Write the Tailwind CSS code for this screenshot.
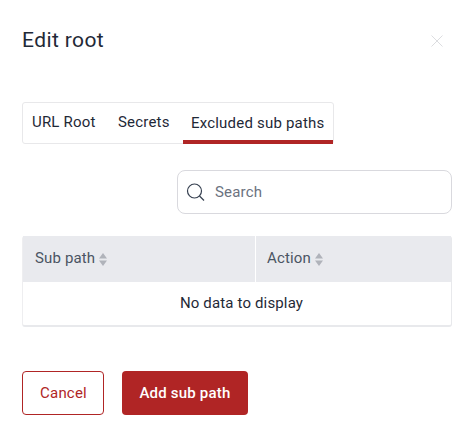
<!DOCTYPE html>
<html lang="en">
<head>
    <meta charset="UTF-8">
    <title>Edit root</title>
    <script src="https://cdn.jsdelivr.net/npm/@tailwindcss/browser@4"></script>
</head>
<body class="bg-white font-['Roboto',sans-serif] text-[#1f2937] h-[439px] overflow-hidden">
    <div class="flex flex-col pl-[22px] pr-[22px]">
        <!-- header -->
        <div class="flex justify-between items-center pt-[26px] h-[54px]">
            <h1 class="text-[21px] leading-[28px] font-normal text-[#1f2937] tracking-[0.4px]">Edit root</h1>
            <svg class="w-[12px] h-[12px] mr-[9px] mt-[2px]" viewBox="0 0 12 12" fill="none" stroke="#dcdde0" stroke-width="1"><path d="M0.5 0.5L11.5 11.5M11.5 0.5L0.5 11.5"/></svg>
        </div>
        <!-- tabs -->
        <div class="mt-[48px] flex w-[312px] h-[42px] border border-[#e8e8ea] rounded-[3px] text-[15px] tracking-[0.2px] text-[#1f2937]">
            <div class="pl-[9px] pt-[8px] w-[95px]">URL Root</div>
            <div class="pt-[8px] w-[65px]">Secrets</div>
            <div class="flex-1 pl-[8px] pt-[9px] border-b-[4px] border-[#b02525] -mb-px">Excluded sub paths</div>
        </div>
        <!-- search -->
        <div class="mt-[26px] ml-auto flex items-center w-[275px] h-[44px] border border-[#d9d9de] rounded-[8px]">
            <svg class="w-[20px] h-[20px] ml-[8px]" viewBox="0 0 20 20" fill="none" stroke="#374151" stroke-width="1.2"><circle cx="8.5" cy="9" r="7"/><path d="M13.5 14L18 18.5"/></svg>
            <span class="ml-[9px] text-[15px] tracking-[0.2px] text-[#6b7280]">Search</span>
        </div>
        <!-- table -->
        <div class="mt-[22px] border-r border-b-2 border-[#e8e9ec] rounded-[3px] border-l border-l-[#eeeef0]">
            <div class="flex h-[46px] bg-[#e9eaee] text-[15px] tracking-[0.15px] text-[#4b5563]">
                <div class="flex items-center w-[233px] pl-[12px] pb-[2px] border-r border-white">Sub path<svg class="ml-[4px] w-[8px] h-[13px] mt-[2px]" viewBox="0 0 8 13" fill="#b0b3ba"><path d="M4 0L8 5.5H0Z M0 7.5H8L4 13Z"/></svg></div>
                <div class="flex items-center pl-[11px] pb-[2px]">Action<svg class="ml-[4px] w-[8px] h-[13px] mt-[2px]" viewBox="0 0 8 13" fill="#b0b3ba"><path d="M4 0L8 5.5H0Z M0 7.5H8L4 13Z"/></svg></div>
            </div>
            <div class="h-[43px] flex items-center justify-center pl-[9px] text-[15px] tracking-[0.15px] text-[#1f2937]">No data to display</div>
        </div>
        <!-- buttons -->
        <div class="mt-[44px] flex gap-[18px] text-[15px] tracking-[0.2px]">
            <button class="w-[82px] h-[44px] pl-px border border-[#b02525] rounded-[4px] text-[#b02525]">Cancel</button>
            <button class="w-[126px] h-[44px] bg-[#b02525] rounded-[4px] text-white font-medium">Add sub path</button>
        </div>
    </div>
</body>
</html>
